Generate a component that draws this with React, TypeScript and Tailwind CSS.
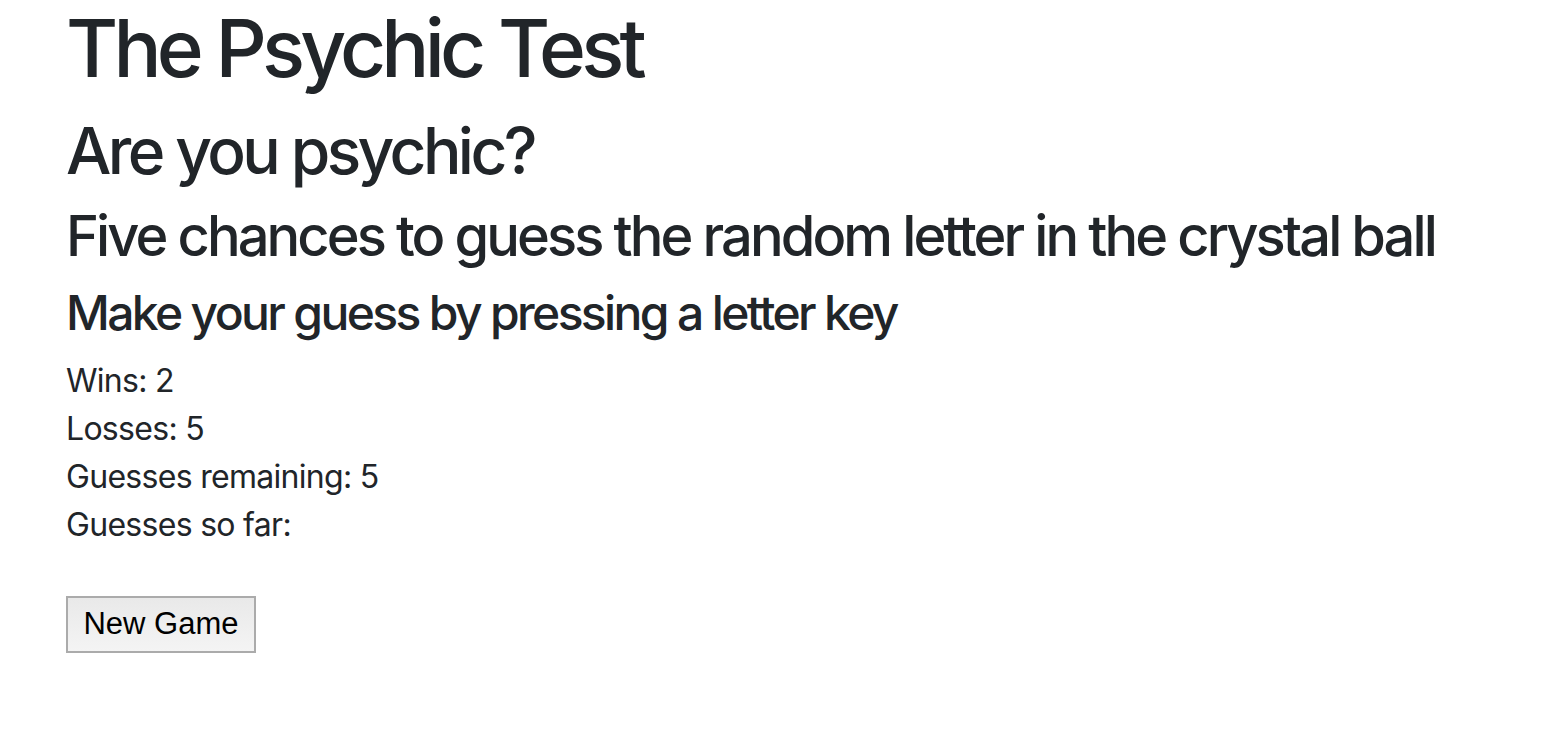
export default function App() {
  const stats = [
    ["Wins", "2"],
    ["Losses", "5"],
    ["Guesses remaining", "5"],
    ["Guesses so far", ""],
  ];

  return (
    <div className="min-h-screen bg-white pl-[66px] text-[#212529] font-['Inter','Liberation_Sans',sans-serif]">
      <h1 className="mb-4 text-[80px] font-medium leading-[96px] tracking-[-0.06em]">The Psychic Test</h1>
      <h2 className="mb-[14px] text-[64px] font-medium leading-[77px] tracking-[-0.056em]">Are you psychic?</h2>
      <h3 className="mb-[14px] text-[56px] font-medium leading-[67px] tracking-[-0.052em]">
        Five chances to guess the random letter in the crystal ball
      </h3>
      <h4 className="mb-[15px] text-[48px] font-medium leading-[58px] tracking-[-0.055em]">
        Make your guess by pressing a letter key
      </h4>
      <div className="text-[32px] leading-[48px] tracking-[-0.022em]">
        {stats.map(([label, value]) => (
          <div key={label}>
            {label}: {value}
          </div>
        ))}
      </div>
      <button className="mt-[47px] h-[57px] w-[190px] border-2 border-[#ababab] bg-gradient-to-b from-[#e9e9e9] to-[#f4f4f4] text-[31px] text-black font-['Liberation_Sans',sans-serif]">
        New Game
      </button>
    </div>
  );
}
